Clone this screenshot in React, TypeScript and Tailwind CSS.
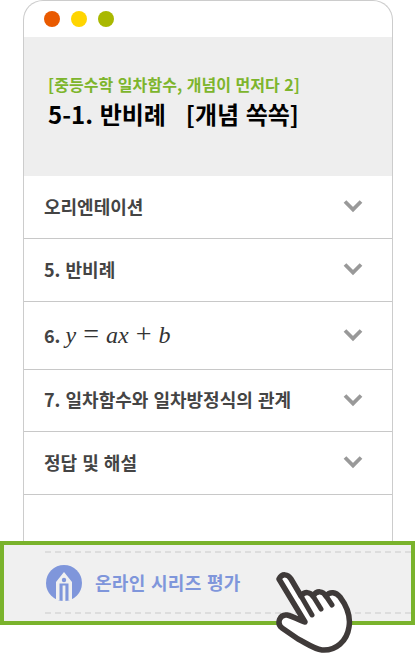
import React from 'react';

const font = "font-['Noto_Sans_CJK_KR','Noto_Sans',sans-serif]";

const Chevron = () => (
  <svg width="20" height="14" viewBox="0 0 20 14" className="shrink-0">
    <path d="M2 2.5 L10 10.5 L18 2.5" fill="none" stroke="#999999" strokeWidth="3.8" />
  </svg>
);

const Row = ({ h, children }: { h: string; children: React.ReactNode }) => (
  <div className={`flex items-center justify-between pl-[20px] pr-[29px] pb-[2px] border-b border-[#c8c8c8] ${h}`}>
    <div className="text-[18px] font-bold text-[#444444] whitespace-nowrap [word-spacing:1px]">{children}</div>
    <Chevron />
  </div>
);

const PencilLogo = () => (
  <svg width="36" height="36" viewBox="0 0 36 36" className="shrink-0">
    <circle cx="18" cy="18" r="18" fill="#7f96db" />
    <path d="M18 7 L26 17 V35 H22.5 V18.5 H13.5 V35 H10 V17 Z" fill="#f0f0f0" />
    <path d="M16.6 20.5 H19.4 V36 H16.6 Z" fill="#f0f0f0" />
    <circle cx="18" cy="15" r="2.2" fill="#7f96db" />
  </svg>
);

const Hand = () => (
  <svg width="82" height="84" viewBox="0 0 82 84" className="absolute left-[274px] top-[571px]">
    <path
      d="M5 8 C8 2 14 3 17 8 L27 25 C31 20 36 21 39 25 C43 19 49 20 52 25 C56 20 62 21 66 26 C72 34 77 44 75 56 C73 70 62 80 48 79 C40 78 32 72 24 68 L8 57 C2 52 6 43 13 44 C19 45 26 50 31 51 Z"
      fill="#ffffff"
      stroke="#3f3a39"
      strokeWidth="5.5"
      strokeLinejoin="round"
    />
    <path d="M27 25 L38 44 M39 25 L47 38 M52 25 L58 34" fill="none" stroke="#3f3a39" strokeWidth="5" strokeLinecap="round" />
  </svg>
);

export default function App() {
  return (
    <div className={`relative w-[415px] h-[653px] bg-white overflow-hidden ${font}`}>
      <div className="mx-[23px] w-[370px] h-[541px] border-x border-t border-[#cccccc] rounded-t-[20px]">
        <div className="flex items-center gap-[11px] h-[36px] pl-[20px]">
          <span className="w-4 h-4 rounded-full bg-[#e95a00]" />
          <span className="w-4 h-4 rounded-full bg-[#ffd500]" />
          <span className="w-4 h-4 rounded-full bg-[#a9b800]" />
        </div>
        <div className="h-[139px] bg-[#eeeeee] pl-[24px] pt-[35px]">
          <p className="text-[16px] leading-[24px] font-bold text-[#7db52c] tracking-[0.1px] [word-spacing:0.6px]">[중등수학 일차함수, 개념이 먼저다 2]</p>
          <p className="mt-[2px] text-[24px] leading-[32px] font-bold text-black whitespace-pre [word-spacing:1.2px]">5-1. 반비례   [개념 쏙쏙]</p>
        </div>
        <Row h="h-[63px]">오리엔테이션</Row>
        <Row h="h-[63px]">5. 반비례</Row>
        <Row h="h-[68px]">
          6.{' '}
          <span className="font-['Liberation_Serif',serif] font-normal text-[24px] text-[#333333] whitespace-pre">
            <i>y</i> <span className="text-[28px] leading-none">=</span> <i>ax</i> <span className="text-[28px] leading-none">+</span> <i>b</i>
          </span>
        </Row>
        <Row h="h-[62px]">7. 일차함수와 일차방정식의 관계</Row>
        <Row h="h-[63px]">정답 및 해설</Row>
      </div>
      <div className="h-[84px] border-4 border-[#7ab32c] bg-[#f0f0f0] pt-[6px] pl-[41px]">
        <div className="flex items-center gap-[13px] h-[63px] pl-[1px] border-y-2 border-dashed border-[#dddddd]">
          <PencilLogo />
          <span className="text-[18px] font-bold text-[#7f96db] tracking-[0.3px] [word-spacing:1px]">온라인 시리즈 평가</span>
        </div>
      </div>
      <Hand />
    </div>
  );
}
